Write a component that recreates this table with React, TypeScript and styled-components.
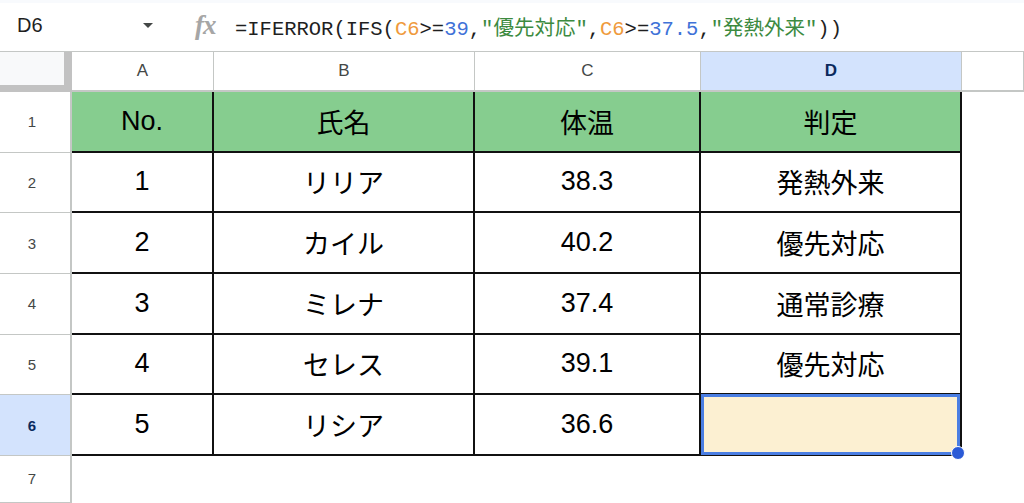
import React from 'react';
import styled, { createGlobalStyle } from 'styled-components';

const GlobalStyle = createGlobalStyle`
  html, body {
    margin: 0;
    padding: 0;
    background: #ffffff;
    overflow: hidden;
  }
  * {
    box-sizing: border-box;
  }
`;

const Page = styled.div`
  width: 1024px;
  height: 503px;
  display: flex;
  flex-direction: column;
  background: #fff;
  font-family: 'Liberation Sans', Arial, 'Noto Sans CJK JP', sans-serif;
`;

/* formula bar */
const FormulaBar = styled.div`
  display: flex;
  align-items: center;
  height: 52px;
  flex-shrink: 0;
  padding-bottom: 3px;
  border-top: 3px solid #f8fafd;
  border-bottom: 1px solid #c4c7c5;
`;

const NameBox = styled.div`
  width: 143px;
  padding-left: 17px;
  font-size: 20px;
  color: #1f1f1f;
`;

const Caret = styled.span`
  width: 0;
  height: 0;
  border-left: 5px solid transparent;
  border-right: 5px solid transparent;
  border-top: 5px solid #444746;
`;

const FxLabel = styled.span`
  margin-left: 42px;
  width: 24px;
  font-family: 'Liberation Serif', 'Times New Roman', serif;
  font-style: italic;
  font-weight: 700;
  font-size: 27px;
  line-height: 1;
  color: #a6a6a6;
  letter-spacing: -1px;
`;

const Formula = styled.div`
  margin-left: 16px;
  font-family: 'Liberation Mono', 'Noto Sans CJK JP', monospace;
  font-size: 20.5px;
  color: #1f1f1f;
  white-space: pre;
`;

const Token = styled.span<{ $kind: 'ref' | 'num' | 'str' }>`
  color: ${({ $kind }) =>
    $kind === 'ref' ? '#ef9a3c' : $kind === 'num' ? '#3f72d8' : '#3c8a3f'};
`;

/* sheet grid */
const Sheet = styled.div`
  flex: 1;
  display: grid;
  grid-template-columns: 72px 142px 261px 226px 261px 1fr;
  grid-template-rows: 40px repeat(6, 60.67px) 1fr;
`;

const Corner = styled.div`
  background: #f8f9fa;
  border-right: 8px solid #c2c2c2;
  border-bottom: 7px solid #c2c2c2;
`;

const ColHeader = styled.div<{ $active?: boolean }>`
  display: flex;
  align-items: center;
  justify-content: center;
  background: ${({ $active }) => ($active ? '#d3e3fd' : '#ffffff')};
  color: ${({ $active }) => ($active ? '#0b2a5e' : '#444746')};
  font-weight: ${({ $active }) => ($active ? 700 : 400)};
  font-size: 17px;
  border-right: 1px solid #c4c7c5;
  border-bottom: 2px solid #c4c7c5;
`;

const RowHeader = styled.div<{ $active?: boolean }>`
  display: flex;
  align-items: center;
  justify-content: center;
  padding-right: 6px;
  background: ${({ $active }) => ($active ? '#d3e3fd' : '#ffffff')};
  color: ${({ $active }) => ($active ? '#0b2a5e' : '#444746')};
  font-weight: ${({ $active }) => ($active ? 700 : 400)};
  font-size: 15px;
  border-right: 2px solid #c4c7c5;
  border-bottom: 1px solid #c4c7c5;
`;

const Cell = styled.div<{ $head?: boolean }>`
  position: relative;
  display: flex;
  align-items: center;
  justify-content: center;
  font-size: 27px;
  color: #000;
  background: ${({ $head }) => ($head ? '#86cd8f' : '#ffffff')};
  border-right: 2px solid #111;
  border-bottom: 2px solid #111;
`;

const EmptyCell = styled.div`
  background: #ffffff;
`;

const Selection = styled.div`
  position: absolute;
  top: -1px;
  left: 0;
  right: 0;
  bottom: -1px;
  background: #fcf0d2;
  border: 3px solid #4a7ee3;
  z-index: 2;
`;

const FillHandle = styled.span`
  position: absolute;
  right: -8px;
  bottom: -8px;
  width: 14px;
  height: 14px;
  border-radius: 50%;
  background: #2a5ad6;
  border: 1px solid #ffffff;
`;

const columns = ['A', 'B', 'C', 'D', ''];

const header = ['No.', '氏名', '体温', '判定'];

const rows = [
  ['1', 'リリア', '38.3', '発熱外来'],
  ['2', 'カイル', '40.2', '優先対応'],
  ['3', 'ミレナ', '37.4', '通常診療'],
  ['4', 'セレス', '39.1', '優先対応'],
  ['5', 'リシア', '36.6', ''],
];

const App: React.FC = () => {
  return (
    <Page>
      <GlobalStyle />
      <FormulaBar>
        <NameBox>D6</NameBox>
        <Caret />
        <FxLabel>fx</FxLabel>
        <Formula>
          =IFERROR(IFS(<Token $kind="ref">C6</Token>&gt;=<Token $kind="num">39</Token>,
          <Token $kind="str">"優先対応"</Token>,<Token $kind="ref">C6</Token>&gt;=
          <Token $kind="num">37.5</Token>,<Token $kind="str">"発熱外来"</Token>))
        </Formula>
      </FormulaBar>

      <Sheet>
        <Corner />
        {columns.map((col, i) => (
          <ColHeader key={i} $active={col === 'D'}>
            {col}
          </ColHeader>
        ))}

        <RowHeader>1</RowHeader>
        {header.map((text) => (
          <Cell key={text} $head>
            {text}
          </Cell>
        ))}
        <EmptyCell />

        {rows.map((row, r) => (
          <React.Fragment key={r}>
            <RowHeader $active={r === 4}>{r + 2}</RowHeader>
            {row.map((text, c) => (
              <Cell key={c}>
                {text}
                {r === 4 && c === 3 && (
                  <Selection>
                    <FillHandle />
                  </Selection>
                )}
              </Cell>
            ))}
            <EmptyCell />
          </React.Fragment>
        ))}

        <RowHeader>7</RowHeader>
        {columns.map((_, i) => (
          <EmptyCell key={i} />
        ))}
      </Sheet>
    </Page>
  );
};

export default App;
